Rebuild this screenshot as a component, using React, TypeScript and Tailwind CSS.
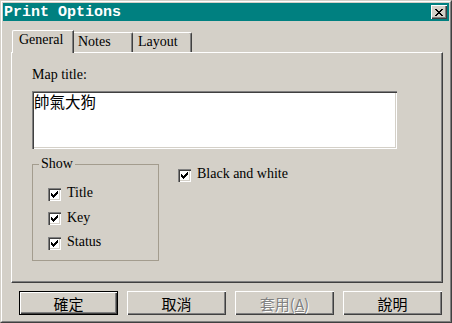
import React from "react";

const raised = "shadow-[inset_1px_1px_#ffffff,inset_-1px_-1px_#404040,inset_-2px_-2px_#808080]";

function Check() {
  const rows: [number, number, number][] = [
    [0, 6, 1],
    [1, 5, 2],
    [2, 0, 1],
    [2, 4, 3],
    [3, 0, 2],
    [3, 3, 3],
    [4, 0, 5],
    [5, 1, 3],
    [6, 2, 1],
  ];
  return (
    <svg width="7" height="7" viewBox="0 0 7 7" shapeRendering="crispEdges">
      {rows.map(([y, x, w], i) => (
        <rect key={i} x={x} y={y} width={w} height={1} fill="#000" />
      ))}
    </svg>
  );
}

function CloseX() {
  const rows: [number, number, number][] = [
    [0, 0, 2], [0, 6, 2],
    [1, 1, 2], [1, 5, 2],
    [2, 2, 4],
    [3, 3, 2],
    [4, 2, 4],
    [5, 1, 2], [5, 5, 2],
    [6, 0, 2], [6, 6, 2],
  ];
  return (
    <svg width="8" height="7" viewBox="0 0 8 7" shapeRendering="crispEdges">
      {rows.map(([y, x, w], i) => (
        <rect key={i} x={x} y={y} width={w} height={1} fill="#000" />
      ))}
    </svg>
  );
}

function CheckBox({ label }: { label: string }) {
  return (
    <div className="flex items-center h-[24px]">
      <div className="w-[13px] h-[13px] bg-white flex items-center justify-center shadow-[inset_1px_1px_#808080,inset_2px_2px_#404040,inset_-1px_-1px_#ffffff,inset_-2px_-2px_#d4d0c8]">
        <Check />
      </div>
      <span className="ml-[6px] text-[14px] leading-[16px] -mt-[2px]">{label}</span>
    </div>
  );
}

function Btn({ children, def, disabled }: { children: React.ReactNode; def?: boolean; disabled?: boolean }) {
  return (
    <div
      className={
        "w-[99px] h-[24px] flex items-center justify-center bg-[#d4d0c8] text-[15px] leading-none font-['Noto_Sans_CJK_TC','Liberation_Sans',sans-serif] " +
        raised +
        (def ? " border border-black" : "") +
        (disabled ? " text-[#808080] [text-shadow:1px_1px_0_#ffffff]" : " text-black")
      }
    >
      {children}
    </div>
  );
}

export default function App() {
  return (
    <div className="w-[452px] h-[323px] bg-[#d4d0c8] border border-t-[#d4d0c8] border-l-[#d4d0c8] border-r-[#404040] border-b-[#404040] font-['Liberation_Serif','Noto_Sans_CJK_TC',serif] text-black">
      <div className="h-full border border-t-white border-l-white border-r-[#808080] border-b-[#808080] p-px flex flex-col">
        {/* title bar */}
        <div className="h-[18px] bg-[#008080] flex items-center justify-between pl-[1px] pr-[2px]">
          <span className="text-white font-bold text-[15px] leading-none font-['Liberation_Mono',monospace]">Print Options</span>
          <div className={"w-[16px] h-[14px] bg-[#d4d0c8] flex items-center justify-center " + raised}>
            <CloseX />
          </div>
        </div>

        {/* tabs */}
        <div className="mt-[9px] ml-[8px] mr-[6px] flex flex-col">
          <div className="flex items-end h-[22px] pl-[1px]">
            <div className="relative z-10 h-[23px] w-[62px] -mb-[1px] bg-[#d4d0c8] border-t border-l border-white rounded-tl-[2px] border-r border-r-[#404040] shadow-[inset_-1px_0_#808080] pl-[6px] pt-[1px] text-[14px] leading-[16px]">
              General
            </div>
            <div className="h-[20px] w-[59px] border-t border-white border-r border-r-[#404040] shadow-[inset_-1px_0_#808080] rounded-tr-[2px] pl-[4px] pt-[1px] text-[14px] leading-[16px]">
              Notes
            </div>
            <div className="h-[20px] w-[59px] border-t border-white border-r border-r-[#404040] shadow-[inset_-1px_0_#808080] rounded-tr-[2px] pl-[5px] pt-[1px] text-[14px] leading-[16px]">
              Layout
            </div>
          </div>
          <div className="h-[231px] border border-t-white border-l-white border-r-[#404040] border-b-[#404040] shadow-[inset_-1px_-1px_#808080] pt-[14px] pl-[20px]">
            <div className="text-[14px] leading-[16px]">Map title:</div>
            <div className="mt-[8px] w-[365px] h-[58px] bg-white shadow-[inset_1px_1px_#808080,inset_2px_2px_#404040,inset_-1px_-1px_#ffffff,inset_-2px_-2px_#d4d0c8] pl-[2px] pt-0">
              <span className="text-[15.5px] leading-[17px] font-['Noto_Sans_CJK_TC',sans-serif]">帥氣大狗</span>
            </div>
            <div className="mt-[7px] flex items-start">
              <fieldset className="w-[127px] h-[105px] border border-[#a39c8e] m-0 p-0">
                <legend className="ml-[6px] px-[2px] text-[14px] leading-[16px]">Show</legend>
                <div className="pl-[15px] pt-[10px] flex flex-col gap-[0.5px]">
                  <CheckBox label="Title" />
                  <CheckBox label="Key" />
                  <CheckBox label="Status" />
                </div>
              </fieldset>
              <div className="ml-[19px] mt-[7px]">
                <CheckBox label="Black and white" />
              </div>
            </div>
          </div>
        </div>

        {/* buttons */}
        <div className="mt-[8px] ml-[16px] flex gap-[9px]">
          <Btn def>確定</Btn>
          <Btn>取消</Btn>
          <Btn disabled>
            套用(<span className="underline">A</span>)
          </Btn>
          <Btn>說明</Btn>
        </div>
      </div>
    </div>
  );
}
